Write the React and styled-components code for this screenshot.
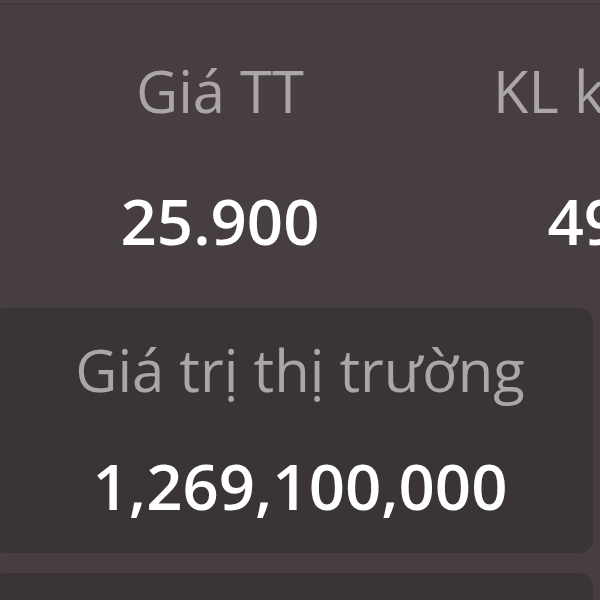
import React from 'react';
import styled, {createGlobalStyle} from 'styled-components';

const GlobalStyle = createGlobalStyle`
    html, body {
        margin: 0;
        padding: 0;
        background-color: #463e3f;
        font-family: "Open Sans", "Noto Sans", sans-serif;
        overflow: hidden;
    }
`

const stats = [
    {label: 'Giá TT', value: '25.900'},
    {label: 'KL khớp', value: '490'},
];

const App = () => {
    return(
        <>
        <GlobalStyle />
        <Page>
            <TopEdge />
            <StatRow>
                {stats.map((s) => (
                    <Stat key={s.label}>
                        <Label>{s.label}</Label>
                        <Value $top={69}>{s.value}</Value>
                    </Stat>
                ))}
            </StatRow>
            <Card>
                <Label>Giá trị thị trường</Label>
                <Value $top={55}>1,269,100,000</Value>
            </Card>
            <Card />
        </Page>
        </>
    )
};

const Page = styled.div`
    width: 600px;
    height: 600px;
    overflow: hidden;
    display: flex;
    flex-direction: column;
`

const TopEdge = styled.div`
    height: 3px;
    flex-shrink: 0;
    background-color: #4a4243;
    border-bottom: 1px solid #3f3738;
`

const StatRow = styled.div`
    display: flex;
    padding: 57.5px 0 0 29px;
    height: 304px;
    box-sizing: border-box;
    flex-shrink: 0;
`

const Stat = styled.div`
    flex: 0 0 382px;
    display: flex;
    flex-direction: column;
    align-items: center;
    white-space: nowrap;
`

const Label = styled.div`
    font-size: 58px;
    line-height: 1;
    font-weight: 400;
    color: #aba5a5;
    white-space: nowrap;
`

const Value = styled.div`
    margin-top: ${p => p.$top}px;
    font-size: 63.5px;
    line-height: 1;
    font-weight: 600;
    color: #ffffff;
    white-space: nowrap;
`

const Card = styled.div`
    flex-shrink: 0;
    margin: 0 0 20px -8px;
    width: 601px;
    box-sizing: border-box;
    padding: 32.5px 0 36px 15px;
    min-height: 245px;
    border-radius: 14px;
    background-color: #3b3435;
    display: flex;
    flex-direction: column;
    align-items: center;
`

export default App;
